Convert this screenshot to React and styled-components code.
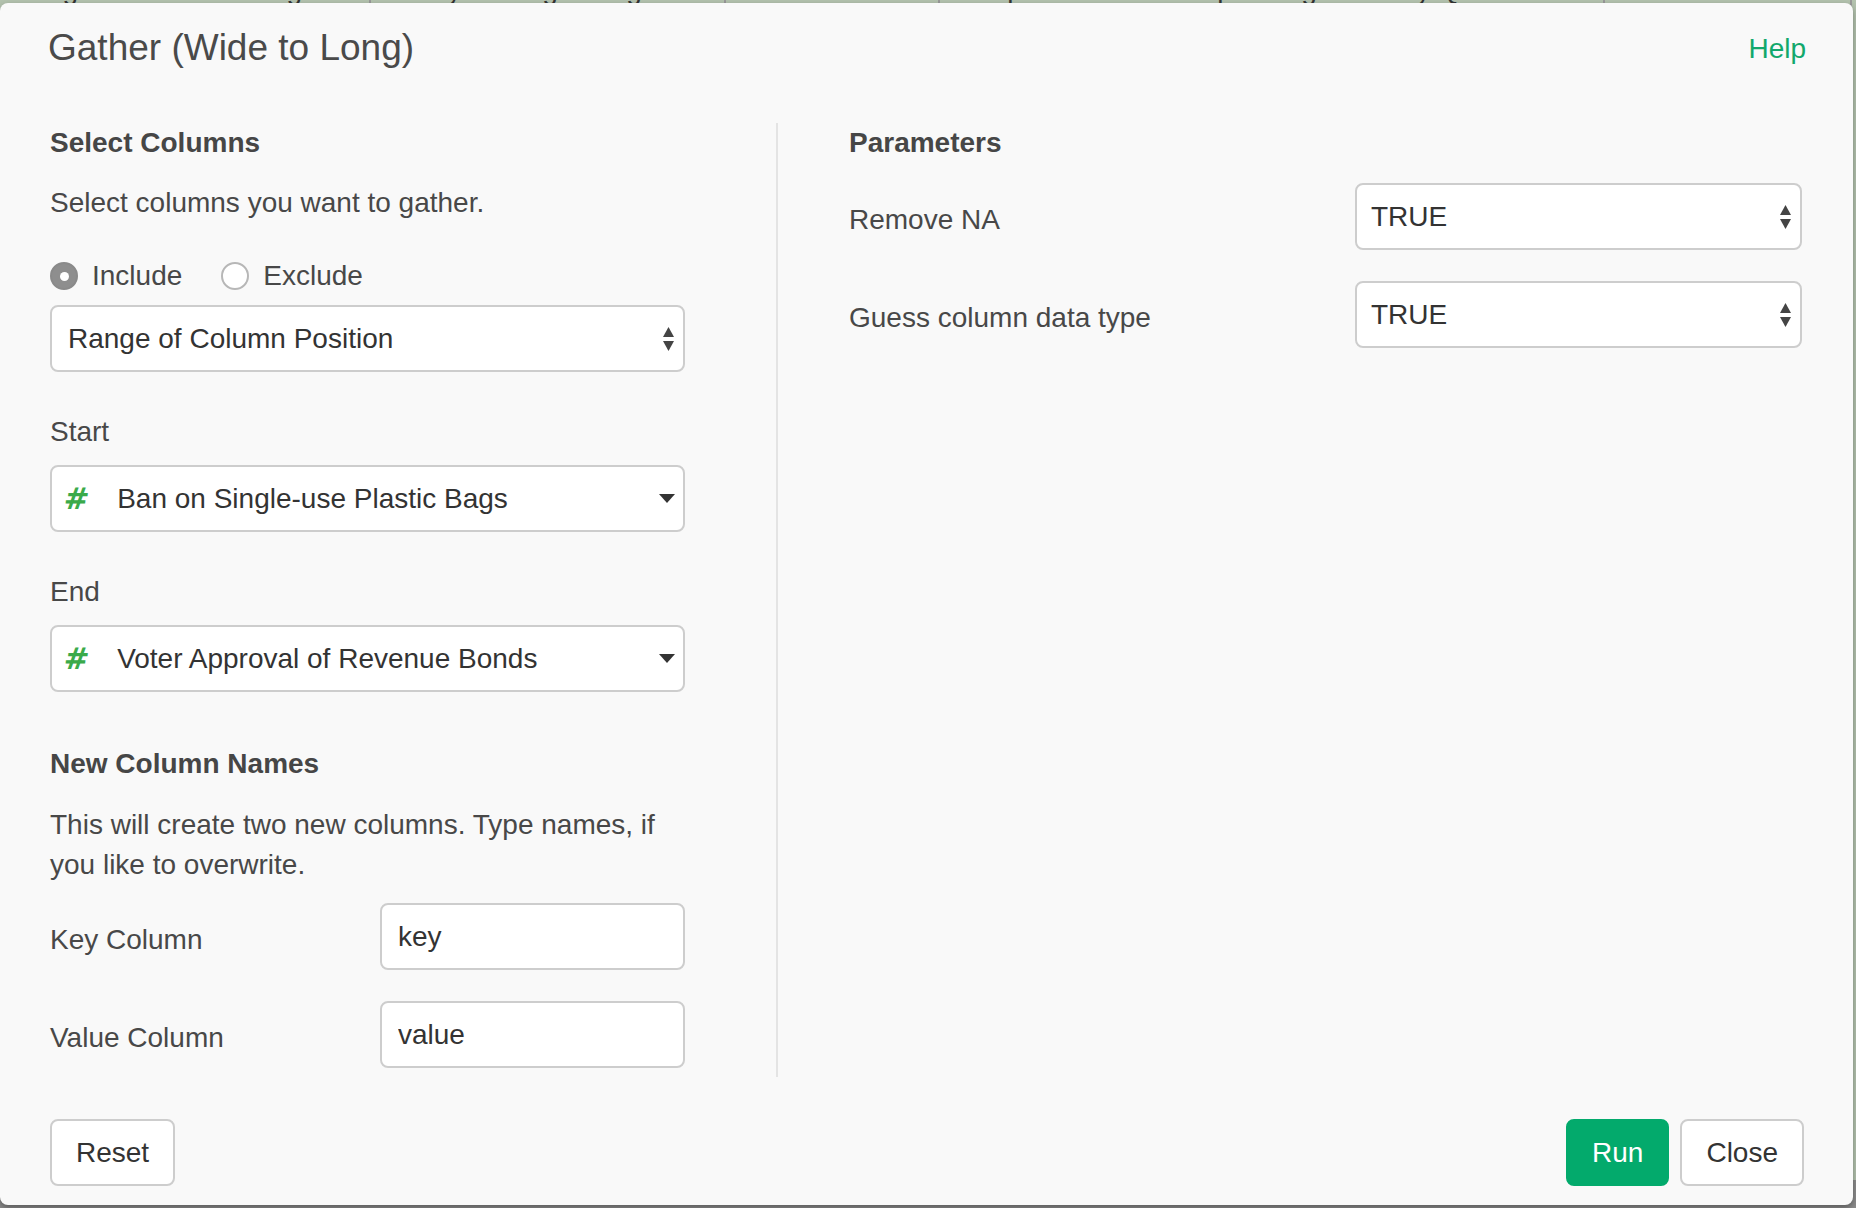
import React from 'react';
import styled, { createGlobalStyle } from 'styled-components';

const GlobalStyle = createGlobalStyle`
  html, body {
    margin: 0;
    padding: 0;
  }
  body {
    background: #8c8c8c;
    font-family: "Liberation Sans", Arial, sans-serif;
    overflow: hidden;
  }
`;

const Page = styled.div`
  position: relative;
  width: 1856px;
  height: 1208px;
  overflow: hidden;
  background: linear-gradient(#b3c2ae 0, #b3c2ae 1180px, #8c8c8c 1180px);
`;

const HeaderStrip = styled.div`
  display: flex;
  margin-top: -26px;
  height: 32px;
  white-space: nowrap;
  font-size: 28px;
  line-height: 32px;
  color: #333;
`;

const HeaderCell = styled.div`
  padding: 0 22px;
  border-right: 2px solid #999;
`;

const Modal = styled.div`
  position: absolute;
  top: 3px;
  left: 0;
  right: 3px;
  bottom: 3px;
  background: #f9f9f9;
  border-radius: 8px;
  box-shadow: 0 3px 6px rgba(0, 0, 0, 0.35);
  display: flex;
  flex-direction: column;
  color: #444;
`;

const Header = styled.div`
  display: flex;
  justify-content: space-between;
  align-items: center;
  padding: 24px 47px 0 48px;
`;

const Title = styled.h4`
  margin: 0;
  font-size: 37px;
  line-height: 40px;
  font-weight: normal;
  color: #4a4a4a;
`;

const HelpLink = styled.a`
  font-size: 28px;
  line-height: 40px;
  color: #12a86c;
  text-decoration: none;
  margin-top: 2px;
`;

const Body = styled.div`
  display: flex;
  padding: 54px 51px 0 50px;
`;

const LeftCol = styled.div`
  width: 635px;
  padding-bottom: 9px;
  display: flex;
  flex-direction: column;
`;

const Divider = styled.div`
  width: 2px;
  margin-left: 91px;
  background: #e4e4e4;
`;

const RightCol = styled.div`
  flex: 1;
  padding-left: 71px;
  display: flex;
  flex-direction: column;
`;

const SectionTitle = styled.div`
  font-size: 28px;
  line-height: 40px;
  font-weight: bold;
  color: #464646;
  margin-top: ${p => p.mt || 0}px;
`;

const Text = styled.div`
  font-size: 28px;
  line-height: 40px;
  color: #484848;
  margin-top: ${p => p.mt || 0}px;
`;

const RadioRow = styled.div`
  display: flex;
  align-items: center;
  gap: 39px;
  height: 40px;
  margin-top: 33px;
`;

const RadioLabel = styled.label`
  display: inline-flex;
  align-items: center;
  gap: 14px;
  font-size: 28px;
  line-height: 40px;
  color: #484848;
`;

const RadioDot = styled.span`
  box-sizing: border-box;
  width: 28px;
  height: 28px;
  border-radius: 50%;
  display: inline-flex;
  align-items: center;
  justify-content: center;
  border: 2px solid ${p => (p.checked ? '#8a8a8a' : '#b7b7b7')};
  background: ${p => (p.checked ? '#8e8e8e' : '#fff')};
  &::after {
    content: '';
    display: ${p => (p.checked ? 'block' : 'none')};
    width: 9px;
    height: 9px;
    border-radius: 50%;
    background: #fff;
  }
`;

const SelectBox = styled.div`
  box-sizing: border-box;
  display: flex;
  align-items: center;
  height: 67px;
  width: ${p => (p.width ? `${p.width}px` : '100%')};
  margin-top: ${p => p.mt || 0}px;
  padding: 0 8px 0 ${p => p.pad || 16}px;
  background: #fff;
  border: 2px solid #cdcdcd;
  border-radius: 8px;
  font-size: 28px;
  color: #333;
  white-space: nowrap;
`;

const SelectValue = styled.span`
  flex: 1;
`;

const TypeHash = styled.span`
  font-family: "DejaVu Sans", sans-serif;
  font-weight: bold;
  font-size: 30px;
  color: #3aaa4a;
  margin-right: 28px;
  display: inline-block;
  transform: skewX(-6deg);
`;

const Row = styled.div`
  display: flex;
  align-items: center;
  justify-content: space-between;
  margin-top: ${p => p.mt || 0}px;
`;

const RowLabel = styled.span`
  font-size: 28px;
  line-height: 40px;
  color: #484848;
  padding-top: 6px;
`;

const TextInput = styled.input`
  box-sizing: border-box;
  width: 305px;
  height: 67px;
  padding: 0 16px;
  background: #fff;
  border: 2px solid #cdcdcd;
  border-radius: 8px;
  font-family: "Liberation Sans", Arial, sans-serif;
  font-size: 28px;
  color: #333;
  outline: none;
`;

const Footer = styled.div`
  display: flex;
  align-items: center;
  padding: 42px 49px 0 50px;
`;

const ButtonGroup = styled.div`
  display: flex;
  gap: 11px;
  margin-left: auto;
`;

const Button = styled.button`
  box-sizing: border-box;
  height: 67px;
  padding: 0 24px;
  border-radius: 8px;
  font-family: "Liberation Sans", Arial, sans-serif;
  font-size: 28px;
  border: 2px solid ${p => (p.primary ? '#03aa6c' : '#cdcdcd')};
  background: ${p => (p.primary ? '#03aa6c' : '#fff')};
  color: ${p => (p.primary ? '#fff' : '#333')};
  cursor: pointer;
`;

const UpDownArrows = () => (
  <svg width="13" height="26" viewBox="0 0 13 26">
    <polygon points="1,11 6.5,1 12,11" fill="#444" />
    <polygon points="1,15 6.5,25 12,15" fill="#444" />
  </svg>
);

const CaretDown = () => (
  <svg width="16" height="9" viewBox="0 0 16 9">
    <polygon points="0,0 16,0 8,9" fill="#333" />
  </svg>
);

const Select = ({ value, mt, width, pad }) => (
  <SelectBox mt={mt} width={width} pad={pad}>
    <SelectValue>{value}</SelectValue>
    <UpDownArrows />
  </SelectBox>
);

const ColumnSelect = ({ value, mt }) => (
  <SelectBox mt={mt} pad={12}>
    <TypeHash>#</TypeHash>
    <SelectValue>{value}</SelectValue>
    <CaretDown />
  </SelectBox>
);

const backdropColumns = [
  'Single-use Plastic Bags  ⌄',
  'Carryout Bag Charges  ⌄',
  'Citizens Lit  ⌄',
  'Corporate Political Spending Advisory Question  ⌄',
  'Council Districts',
];

export default function App() {
  return (
    <Page>
      <GlobalStyle />
      <HeaderStrip>
        {backdropColumns.map(c => <HeaderCell key={c}>{c}</HeaderCell>)}
      </HeaderStrip>
      <Modal>
        <Header>
          <Title>Gather (Wide to Long)</Title>
          <HelpLink href="#">Help</HelpLink>
        </Header>
        <Body>
          <LeftCol>
            <SectionTitle>Select Columns</SectionTitle>
            <Text mt={20}>Select columns you want to gather.</Text>
            <RadioRow>
              <RadioLabel><RadioDot checked />Include</RadioLabel>
              <RadioLabel><RadioDot />Exclude</RadioLabel>
            </RadioRow>
            <Select mt={9} value="Range of Column Position" />
            <Text mt={40}>Start</Text>
            <ColumnSelect mt={13} value="Ban on Single-use Plastic Bags" />
            <Text mt={40}>End</Text>
            <ColumnSelect mt={13} value="Voter Approval of Revenue Bonds" />
            <SectionTitle mt={52}>New Column Names</SectionTitle>
            <Text mt={21}>This will create two new columns. Type names, if you like to overwrite.</Text>
            <Row mt={18}>
              <RowLabel>Key Column</RowLabel>
              <TextInput defaultValue="key" />
            </Row>
            <Row mt={31}>
              <RowLabel>Value Column</RowLabel>
              <TextInput defaultValue="value" />
            </Row>
          </LeftCol>
          <Divider />
          <RightCol>
            <SectionTitle>Parameters</SectionTitle>
            <Row mt={20}>
              <RowLabel>Remove NA</RowLabel>
              <Select width={447} pad={14} value="TRUE" />
            </Row>
            <Row mt={31}>
              <RowLabel>Guess column data type</RowLabel>
              <Select width={447} pad={14} value="TRUE" />
            </Row>
          </RightCol>
        </Body>
        <Footer>
          <Button>Reset</Button>
          <ButtonGroup>
            <Button primary>Run</Button>
            <Button>Close</Button>
          </ButtonGroup>
        </Footer>
      </Modal>
    </Page>
  );
}
